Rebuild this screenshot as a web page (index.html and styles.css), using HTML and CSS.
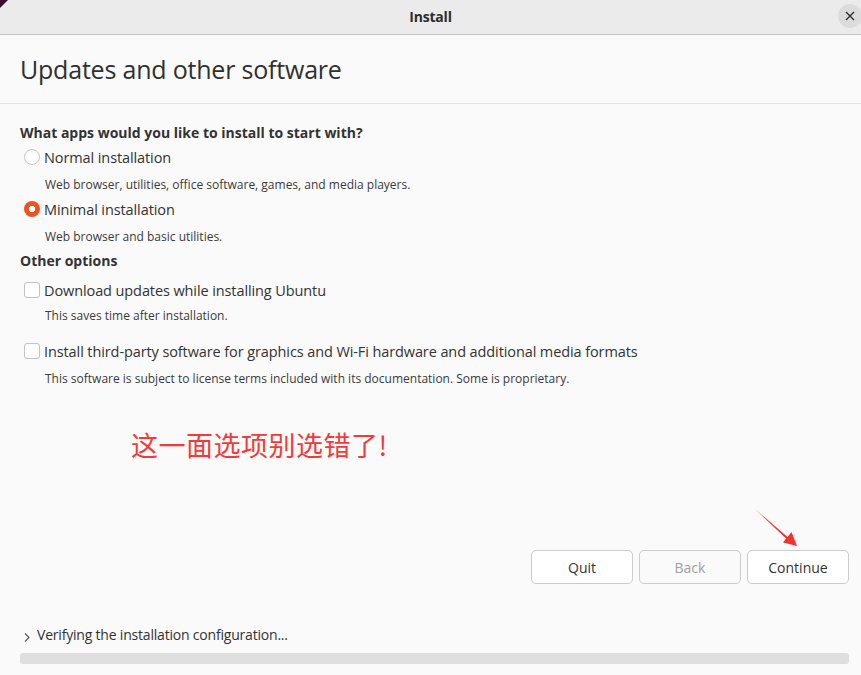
FILE: index.html
```html
<!DOCTYPE html>
<html>
<head>
<meta charset="utf-8">
<link rel="stylesheet" href="styles.css">
</head>
<body>
<div class="window">
  <div class="corner"></div>
  <header class="headerbar">
    <span class="title">Install</span>
    <button class="close" aria-label="Close">
      <svg width="10" height="10" viewBox="0 0 10 10"><path d="M1 1L9 9M9 1L1 9" stroke="#2e2e2e" stroke-width="1.4" fill="none"/></svg>
    </button>
  </header>
  <div class="page-head">
    <h1 class="page-title">Updates and other software</h1>
  </div>
  <main class="content">
    <div class="section-title">What apps would you like to install to start with?</div>
    <div class="option">
      <span class="radio"></span>
      <span class="label">Normal installation</span>
    </div>
    <div class="desc">Web browser, utilities, office software, games, and media players.</div>
    <div class="option">
      <span class="radio checked"></span>
      <span class="label">Minimal installation</span>
    </div>
    <div class="desc">Web browser and basic utilities.</div>
    <div class="section-title other">Other options</div>
    <div class="option check-opt">
      <span class="checkbox"></span>
      <span class="label">Download updates while installing Ubuntu</span>
    </div>
    <div class="desc check-desc">This saves time after installation.</div>
    <div class="option check-opt second">
      <span class="checkbox"></span>
      <span class="label">Install third-party software for graphics and Wi-Fi hardware and additional media formats</span>
    </div>
    <div class="desc check-desc second">This software is subject to license terms included with its documentation. Some is proprietary.</div>
    <div class="note">这一面选项别选错了!</div>
    <div class="buttons">
      <button class="btn">Quit</button>
      <button class="btn disabled">Back</button>
      <button class="btn">Continue</button>
      <svg class="arrow" width="46" height="42" viewBox="-1 -1 46 42">
        <path d="M0 0 L32.5 28 L36.5 23 L42 37 L28 33.5 L31 29.6 Z" fill="#f2342f"/>
      </svg>
    </div>
  </main>
  <footer class="footer">
    <div class="expander">
      <svg class="chev" width="8" height="10" viewBox="0 0 8 10"><path d="M2 1.5L6 5.5L2 9.5" stroke="#555" stroke-width="1.1" fill="none"/></svg>
      <span>Verifying the installation configuration...</span>
    </div>
    <div class="progress"></div>
  </footer>
</div>
</body>
</html>
```

FILE: styles.css
```css
* { box-sizing: border-box; }
html, body { margin: 0; padding: 0; }
body {
  width: 861px;
  height: 675px;
  overflow: hidden;
  background: #fafafa;
  font-family: "Noto Sans", "Open Sans", sans-serif;
  color: #3c3c3c;
}
.window {
  position: relative;
  width: 861px;
  height: 675px;
  background: #fafafa;
  display: flex;
  flex-direction: column;
}
.corner {
  position: absolute;
  left: 0; top: 0;
  width: 8px; height: 8px;
  background: #3a0d2a;
  clip-path: polygon(0 0, 100% 0, 0 100%);
  z-index: 2;
}
.headerbar {
  position: relative;
  height: 35px;
  flex: none;
  background: #ebebeb;
  border-bottom: 1px solid #c4c4c4;
  display: flex;
  align-items: center;
  justify-content: center;
}
.title {
  font-family: "Open Sans", "Noto Sans", sans-serif;
  font-weight: 700;
  font-size: 14px;
  color: #2e2e2e;
  letter-spacing: -0.2px;
  margin-top: -1px;
}
.close {
  position: absolute;
  right: -1px;
  top: 4px;
  width: 24px;
  height: 24px;
  border: none;
  border-radius: 50%;
  background: #dcdcdc;
  padding: 0;
  display: flex;
  align-items: center;
  justify-content: center;
}
.page-head {
  flex: none;
  height: 69px;
  border-bottom: 1px solid #e2e2e2;
  padding: 18px 0 0 20px;
}
.page-title {
  margin: 0;
  font-family: "Open Sans", sans-serif;
  font-weight: 400;
  font-size: 25px;
  letter-spacing: -0.2px;
  color: #303030;
  line-height: 32px;
}
.content {
  flex: 1;
  padding: 20px 0 0 20px;
  display: flex;
  flex-direction: column;
  align-items: flex-start;
}
.section-title {
  font-family: "Open Sans", sans-serif;
  font-weight: 700;
  font-size: 14px;
  line-height: 18px;
  color: #333;
}
.section-title.other { margin-top: 7px; }
.option {
  display: flex;
  align-items: center;
  margin-top: 6px;
  margin-left: 4px;
  height: 18px;
}
.option + .desc + .option { margin-top: 7px; }
.label {
  font-family: "Open Sans", sans-serif;
  font-size: 14.5px;
  color: #333;
  margin-left: 4px;
  letter-spacing: -0.1px;
}
.radio {
  width: 16px;
  height: 16px;
  border-radius: 50%;
  border: 1px solid #c6c6c6;
  background: #fff;
  display: inline-block;
}
.radio.checked {
  border: none;
  background: radial-gradient(circle, #fff 0 3px, #e95420 3.5px);
}
.desc {
  font-family: "Open Sans", sans-serif;
  font-size: 12px;
  color: #3a3a3a;
  margin-left: 25px;
  margin-top: 11px;
  line-height: 16px;
}
.section-title + .check-opt { margin-top: 11px; }
.option + .desc + .check-opt.second { margin-top: 18px; }
.checkbox {
  width: 16px;
  height: 16px;
  border-radius: 3px;
  border: 1px solid #c2c2c2;
  background: #fff;
  display: inline-block;
}
.check-desc { margin-top: 9px; }
.check-desc.second { margin-top: 11px; }
.note {
  margin-top: 40px;
  margin-left: 111px;
  font-family: "Noto Sans CJK SC", sans-serif;
  font-size: 27px;
  color: #f33a3a;
  line-height: 36px;
  letter-spacing: 0.5px;
}
.buttons {
  position: relative;
  align-self: stretch;
  display: flex;
  justify-content: flex-end;
  gap: 6px;
  margin-top: 87px;
  padding-right: 12px;
}
.btn {
  width: 102px;
  height: 34px;
  border: 1px solid #cdcdcd;
  border-radius: 5px;
  background: #fff;
  font-family: "Open Sans", sans-serif;
  font-size: 14px;
  color: #333;
  padding: 0;
}
.btn.disabled { color: #a0a0a0; background: #fafafa; }
.arrow {
  position: absolute;
  left: 734px;
  top: -42px;
}
.footer {
  flex: none;
  padding: 0 12px 11px 20px;
}
.expander {
  display: flex;
  align-items: center;
  height: 20px;
  font-family: "Open Sans", sans-serif;
  font-size: 14px;
  color: #333;
  letter-spacing: -0.2px;
}
.chev { margin: 6px 6px 0 3px; }
.progress {
  margin-top: 9px;
  height: 11px;
  border-radius: 3px;
  background: #dfdfdf;
}
```
